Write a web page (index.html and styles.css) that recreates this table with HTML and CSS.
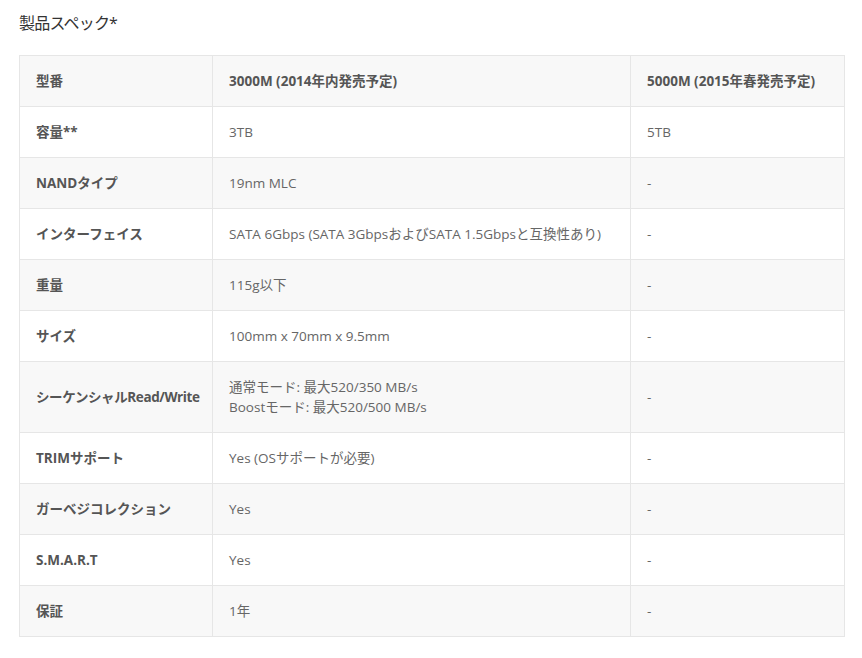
FILE: index.html
```html
<!DOCTYPE html>
<html lang="ja">
<head>
<meta charset="utf-8">
<title>製品スペック</title>
<link rel="stylesheet" href="styles.css">
</head>
<body>
<div class="page">
  <h2 class="title">製品スペック*</h2>
  <table class="spec">
    <colgroup>
      <col class="c1"><col class="c2"><col class="c3">
    </colgroup>
    <tr class="alt"><th>型番</th><th>3000M (2014年内発売予定)</th><th>5000M (2015年春発売予定)</th></tr>
    <tr><th>容量**</th><td>3TB</td><td>5TB</td></tr>
    <tr class="alt"><th>NANDタイプ</th><td>19nm MLC</td><td>-</td></tr>
    <tr><th>インターフェイス</th><td>SATA 6Gbps (SATA 3GbpsおよびSATA 1.5Gbpsと互換性あり)</td><td>-</td></tr>
    <tr class="alt"><th>重量</th><td>115g以下</td><td>-</td></tr>
    <tr><th>サイズ</th><td>100mm x 70mm x 9.5mm</td><td>-</td></tr>
    <tr class="alt"><th class="tight">シーケンシャルRead/Write</th><td>通常モード: 最大520/350 MB/s<br>Boostモード: 最大520/500 MB/s</td><td>-</td></tr>
    <tr><th>TRIMサポート</th><td>Yes (OSサポートが必要)</td><td>-</td></tr>
    <tr class="alt"><th>ガーベジコレクション</th><td>Yes</td><td>-</td></tr>
    <tr><th>S.M.A.R.T</th><td>Yes</td><td>-</td></tr>
    <tr class="alt"><th>保証</th><td>1年</td><td>-</td></tr>
  </table>
</div>
</body>
</html>
```

FILE: styles.css
```css
html, body {
  margin: 0;
  padding: 0;
  background: #fff;
}
.page {
  padding: 11px 18px 0 19px;
  font-family: "Open Sans", "Noto Sans CJK JP", sans-serif;
  color: #555;
}
.title {
  margin: 0 0 20px 0;
  font-size: 16px;
  font-weight: normal;
  line-height: 24px;
  letter-spacing: -0.8px;
  color: #333;
}
.spec {
  border-collapse: collapse;
  table-layout: fixed;
  width: 825px;
  font-size: 13.5px;
  line-height: 20px;
}
.c1 { width: 193px; }
.c2 { width: 418px; }
.c3 { width: 214px; }
.spec th, .spec td {
  border: 1px solid #e6e6e6;
  padding: 15px 16px;
  text-align: left;
  vertical-align: middle;
  height: 20px;
}
.spec th {
  font-weight: bold;
  color: #555;
  white-space: nowrap;
}
.spec th.tight {
  letter-spacing: -0.4px;
}
.spec td {
  font-weight: normal;
  color: #666;
}
.spec tr.alt {
  background: #f8f8f8;
}
```
